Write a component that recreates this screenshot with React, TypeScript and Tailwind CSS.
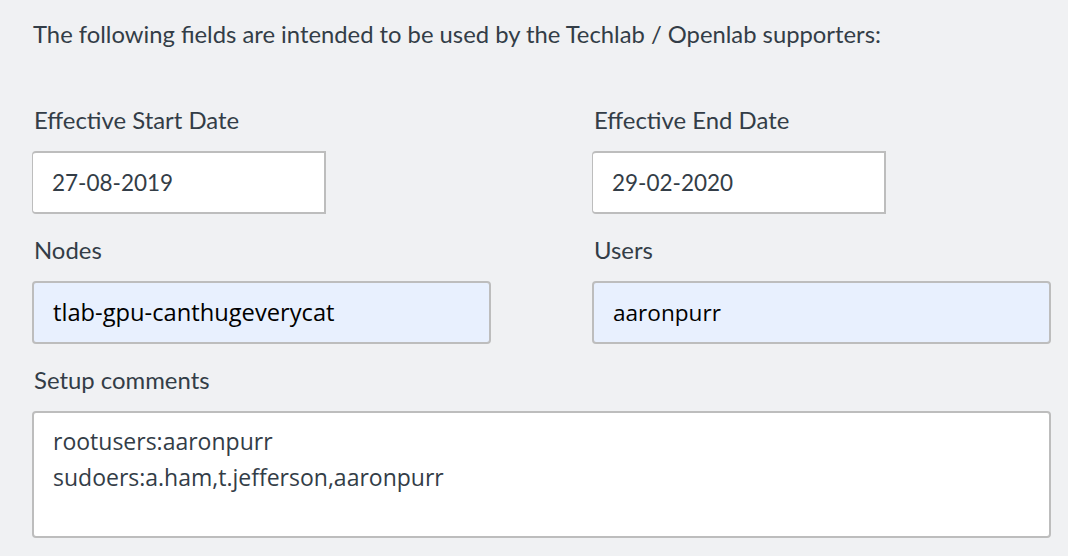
export default function App() {
  const font = { fontFamily: "Lato, 'Noto Sans', sans-serif" };
  const fill = { fontFamily: "'Open Sans', 'Noto Sans', sans-serif" };
  return (
    <div className="w-[1068px] h-[556px] bg-[#f0f1f3] text-[#333d47] pl-[32px] pr-[17px] pt-[20px]" style={font}>
      <p className="text-[23.8px] leading-[28px] pl-[1px]">
        The following fields are intended to be used by the Techlab / Openlab supporters:
      </p>
      <div className="grid grid-cols-[459px_459px] gap-x-[101px] mt-[58px]">
        <div>
          <div className="text-[23.9px] leading-[28px] pl-[2px]">Effective Start Date</div>
          <div className="mt-[17px] w-[294px] h-[63px] bg-white border-2 border-l border-[#bdbdbd] rounded-l-[4px] flex items-center pl-[19px] text-[22.5px]">
            27-08-2019
          </div>
        </div>
        <div>
          <div className="text-[23.9px] leading-[28px] pl-[2px]">Effective End Date</div>
          <div className="mt-[17px] w-[294px] h-[63px] bg-white border-2 border-l border-[#bdbdbd] rounded-l-[4px] flex items-center pl-[19px] text-[22.5px]">
            29-02-2020
          </div>
        </div>
        <div className="mt-[22px]">
          <div className="text-[23.9px] leading-[28px] pl-[2px]">Nodes</div>
          <div className="mt-[17px] h-[63px] bg-[#e8f0fe] border-2 border-[#bdbdbd] rounded-[4px] flex items-center pl-[19px] text-[23.7px] text-black" style={fill}>
            tlab-gpu-canthugeverycat
          </div>
        </div>
        <div className="mt-[22px]">
          <div className="text-[23.9px] leading-[28px] pl-[2px]">Users</div>
          <div className="mt-[17px] h-[63px] bg-[#e8f0fe] border-2 border-[#bdbdbd] rounded-[4px] flex items-center pl-[19px] text-[22.6px] text-black" style={fill}>
            aaronpurr
          </div>
        </div>
      </div>
      <div className="mt-[22px]">
        <div className="text-[23.9px] leading-[28px] pl-[2px]">Setup comments</div>
        <div className="mt-[17px] w-[1019px] h-[127px] bg-white border-2 border-[#bdbdbd] rounded-[4px] pl-[19px] pt-[10px] text-[23px] leading-[36px]" style={fill}>
          <div>rootusers:aaronpurr</div>
          <div>sudoers:a.ham,t.jefferson,aaronpurr</div>
        </div>
      </div>
    </div>
  );
}
